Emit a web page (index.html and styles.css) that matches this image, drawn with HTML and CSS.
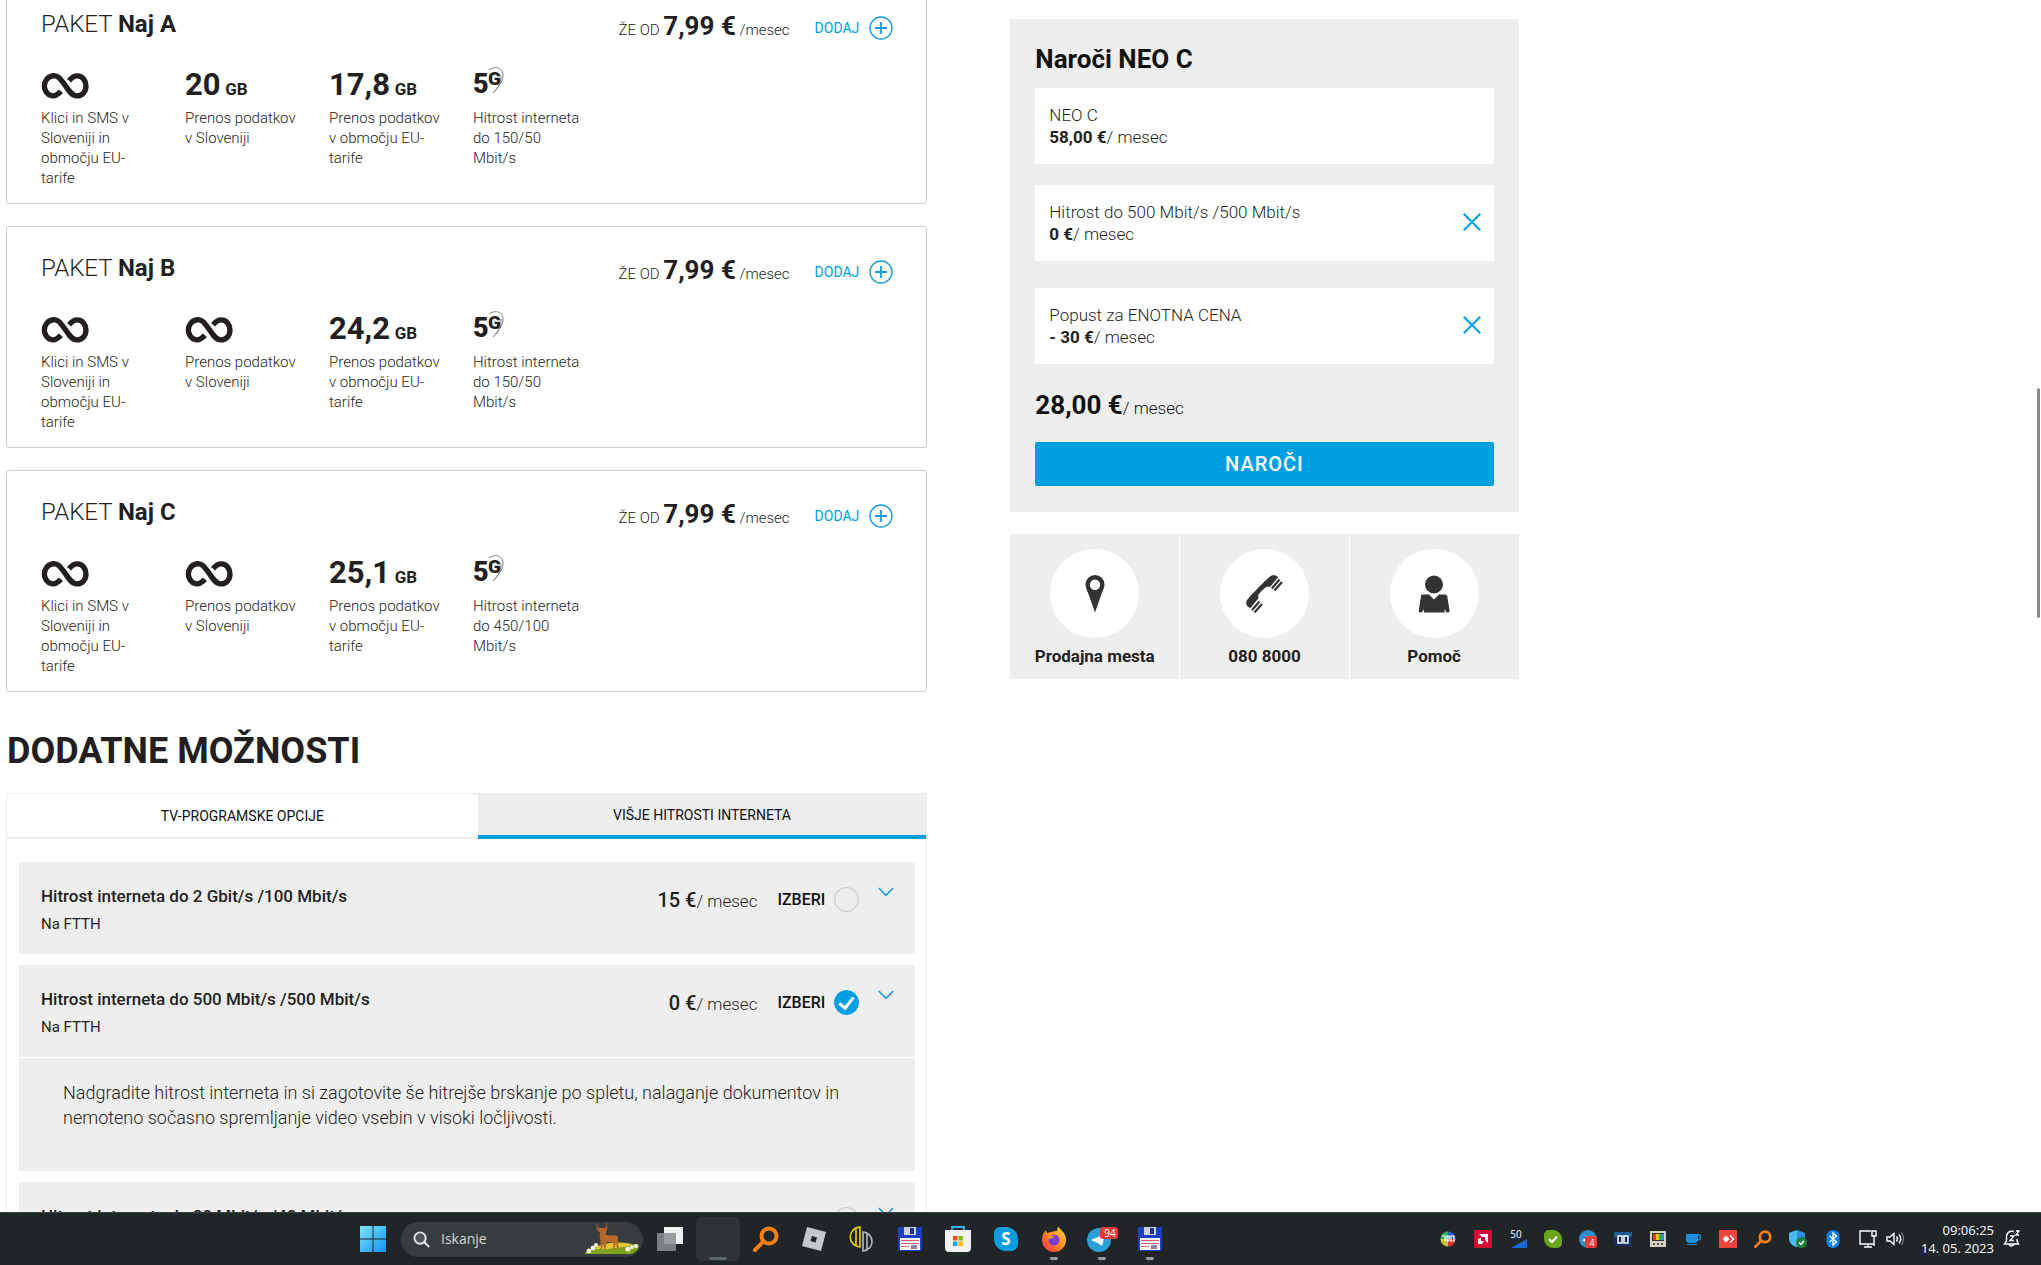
FILE: index.html
```html
<!DOCTYPE html>
<html lang="sl">
<head>
<meta charset="utf-8">
<title>Naroči NEO C</title>
<link rel="stylesheet" href="styles.css">
</head>
<body>
<svg class="defs" aria-hidden="true">
  <symbol id="inf" viewBox="0 0 40 24"><path d="M16.500 16.500C12.500 21 9.500 20.500 8.500 20.300 5 19.700 2.300 16 2.300 12S5 3.700 10 3.200c4-.3 6 2.300 9.500 7.300 4 6 6.500 10 10.500 10 5 0 8-4 8-8.500S35 3.300 30.500 3.300c-3 0-5 1.700-7 4.200" fill="none" stroke="#231f20" stroke-width="4.600"/></symbol>
  <symbol id="fiveg" viewBox="0 0 34 30"><text x="0" y="26" font-size="27" font-weight="900" fill="#231f20">5</text><text x="15" y="18" font-size="19" font-weight="900" fill="#231f20">G</text><path d="M16 3c5-4 13-3 14 4 .6 6-4 13-10 19 5-5 9-12 8-18" fill="none" stroke="#777" stroke-width=".9"/></symbol>
  <symbol id="plus" viewBox="0 0 24 24"><circle cx="12" cy="12" r="11" fill="none" stroke="#1d9ad6" stroke-width="1.400"/><path d="M12 6v12M6 12h12" stroke="#1d9ad6" stroke-width="1.800"/></symbol>
  <symbol id="cross" viewBox="0 0 18 18"><path d="M.7.7l16.600 16.600M17.300.7L.7 17.300" stroke="#009fe3" stroke-width="2"/></symbol>
  <symbol id="chev" viewBox="0 0 16 10"><path d="M.8 1L8 8.300 15.200 1" fill="none" stroke="#1d9ad6" stroke-width="1.600"/></symbol>
  <symbol id="floppy" viewBox="0 0 26 26"><path d="M1 1h24v24H2l-1-1z" fill="#1c3fc4"/><path d="M7 1h12v8H7z" fill="#cdd4e6"/><path d="M13 2h4v6h-4z" fill="#23347c"/><path d="M3 12h20v12H3z" fill="#f5f5fa"/><path d="M4 14.500h18M4 17.500h18M4 20.500h8" stroke="#e0606a" stroke-width="1.200"/><path d="M14 19h6v4h-6z" fill="#889"/></symbol>
  <symbol id="search" viewBox="0 0 26 26"><circle cx="16" cy="10" r="7.500" fill="none" stroke="#f57f14" stroke-width="4"/><path d="M10.500 15.500L2 24" stroke="#f57f14" stroke-width="4" stroke-linecap="round"/></symbol>
</svg>

<div class="viewport">
  <main class="page">
    <div class="content">
      <article class="card">
        <header class="card-head">
          <h3>PAKET <b>Naj A</b></h3>
          <p class="price">ŽE OD <b>7,99 €</b> /mesec</p>
          <button class="add" type="button">DODAJ <svg><use href="#plus"/></svg></button>
        </header>
        <ul class="features">
          <li><div class="fig"><svg class="inf"><use href="#inf"/></svg></div>Klici in SMS v<br>Sloveniji in<br>območju EU-<br>tarife</li>
          <li><div class="fig"><b>20</b> <small>GB</small></div>Prenos podatkov<br>v Sloveniji</li>
          <li><div class="fig"><b>17,8</b> <small>GB</small></div>Prenos podatkov<br>v območju EU-<br>tarife</li>
          <li><div class="fig"><svg class="fiveg"><use href="#fiveg"/></svg></div>Hitrost interneta<br>do 150/50<br>Mbit/s</li>
        </ul>
      </article>
      <article class="card">
        <header class="card-head">
          <h3>PAKET <b>Naj B</b></h3>
          <p class="price">ŽE OD <b>7,99 €</b> /mesec</p>
          <button class="add" type="button">DODAJ <svg><use href="#plus"/></svg></button>
        </header>
        <ul class="features">
          <li><div class="fig"><svg class="inf"><use href="#inf"/></svg></div>Klici in SMS v<br>Sloveniji in<br>območju EU-<br>tarife</li>
          <li><div class="fig"><svg class="inf"><use href="#inf"/></svg></div>Prenos podatkov<br>v Sloveniji</li>
          <li><div class="fig"><b>24,2</b> <small>GB</small></div>Prenos podatkov<br>v območju EU-<br>tarife</li>
          <li><div class="fig"><svg class="fiveg"><use href="#fiveg"/></svg></div>Hitrost interneta<br>do 150/50<br>Mbit/s</li>
        </ul>
      </article>
      <article class="card">
        <header class="card-head">
          <h3>PAKET <b>Naj C</b></h3>
          <p class="price">ŽE OD <b>7,99 €</b> /mesec</p>
          <button class="add" type="button">DODAJ <svg><use href="#plus"/></svg></button>
        </header>
        <ul class="features">
          <li><div class="fig"><svg class="inf"><use href="#inf"/></svg></div>Klici in SMS v<br>Sloveniji in<br>območju EU-<br>tarife</li>
          <li><div class="fig"><svg class="inf"><use href="#inf"/></svg></div>Prenos podatkov<br>v Sloveniji</li>
          <li><div class="fig"><b>25,1</b> <small>GB</small></div>Prenos podatkov<br>v območju EU-<br>tarife</li>
          <li><div class="fig"><svg class="fiveg"><use href="#fiveg"/></svg></div>Hitrost interneta<br>do 450/100<br>Mbit/s</li>
        </ul>
      </article>

      <h2>DODATNE MOŽNOSTI</h2>
      <section class="extras">
        <div class="tabs" role="tablist">
          <button class="tab" role="tab" type="button">TV-PROGRAMSKE OPCIJE</button>
          <button class="tab active" role="tab" type="button" aria-selected="true">VIŠJE HITROSTI INTERNETA</button>
        </div>
        <div class="options">
          <div class="option">
            <div class="option-head">
              <div class="option-name"><b>Hitrost interneta do 2 Gbit/s /100 Mbit/s</b><span>Na FTTH</span></div>
              <div class="option-price"><b>15 €</b>/ mesec</div>
              <label class="pick">IZBERI <input type="checkbox"></label>
              <button class="toggle" type="button" aria-label="Več"><svg><use href="#chev"/></svg></button>
            </div>
          </div>
          <div class="option">
            <div class="option-head">
              <div class="option-name"><b>Hitrost interneta do 500 Mbit/s /500 Mbit/s</b><span>Na FTTH</span></div>
              <div class="option-price"><b>0 €</b>/ mesec</div>
              <label class="pick">IZBERI <input type="checkbox" checked></label>
              <button class="toggle" type="button" aria-label="Več"><svg><use href="#chev"/></svg></button>
            </div>
            <p class="option-body">Nadgradite hitrost interneta in si zagotovite še hitrejše brskanje po spletu, nalaganje dokumentov in nemoteno sočasno spremljanje video vsebin v visoki ločljivosti.</p>
          </div>
          <div class="option">
            <div class="option-head">
              <div class="option-name"><b>Hitrost interneta do 80 Mbit/s /40 Mbit/s</b><span>Na FTTH</span></div>
              <div class="option-price"><b>5 €</b>/ mesec</div>
              <label class="pick">IZBERI <input type="checkbox"></label>
              <button class="toggle" type="button" aria-label="Več"><svg><use href="#chev"/></svg></button>
            </div>
          </div>
        </div>
      </section>
    </div>

    <aside class="side">
      <section class="order">
        <h2>Naroči NEO C</h2>
        <div class="item"><p>NEO C<br><b>58,00 €</b>/ mesec</p></div>
        <div class="item"><p>Hitrost do 500 Mbit/s /500 Mbit/s<br><b>0 €</b>/ mesec</p><button class="remove" type="button" aria-label="Odstrani"><svg><use href="#cross"/></svg></button></div>
        <div class="item last"><p>Popust za ENOTNA CENA<br><b>- 30 €</b>/ mesec</p><button class="remove" type="button" aria-label="Odstrani"><svg><use href="#cross"/></svg></button></div>
        <p class="total"><b>28,00 €</b>/ mesec</p>
        <button class="buy" type="button">NAROČI</button>
      </section>
      <nav class="help">
        <a href="#"><span class="disc"><svg viewBox="0 0 38 38"><path fill-rule="evenodd" d="M19 0a9.500 9.500 0 0 1 9.500 9.500c0 3-1.500 6-3 9.500L19 37.500 12.500 19c-1.500-3.500-3-6.500-3-9.500A9.500 9.500 0 0 1 19 0zm0 4.500a5.200 5.200 0 1 0 0 10.400 5.200 5.200 0 0 0 0-10.400z" fill="#333"/></svg></span>Prodajna mesta</a>
        <a href="#"><span class="disc"><svg viewBox="0 0 38 38"><path d="M25 1.500c2-1.800 6-1.800 8 .7l-7.500 9.300c-1 .8-2 0-3.500.3-2 .8-7.500 6-8.500 8-.8 1.700.3 3-.6 4.200L5.500 33C2 32 .5 29.500 1.500 26 4 22 20 5.500 25 1.500z" fill="#333"/><path d="M34.500 4.500l-7.700 9M37 7l-7.500 8.500M14.500 26.500l-7.500 8.500M17 29l-7.500 8.500" stroke="#333" stroke-width="2.200"/></svg></span>080 8000</a>
        <a href="#"><span class="disc"><svg viewBox="0 0 38 38"><circle cx="19" cy="9.500" r="9" fill="#333"/><path d="M7.500 19.500H14l5 5 5-5h6.500c1 0 1.500 1 1.800 2l2.300 14.500c0 1-1 1.500-2.300 1.500-1.500 0-1.500-1-2-3-.5 0-.7.500-.7 1.500v1.500H8.700V36c0-1-.2-1.500-.7-1.500-.5 2-.5 3-2 3-1.300 0-2.500-.5-2.300-1.500L6 21.200c.2-1 .5-1.700 1.500-1.700z" fill="#333"/></svg></span>Pomoč</a>
      </nav>
    </aside>
  </main>
  <div class="scrollbar"></div>
</div>

<footer class="taskbar">
  <button class="app start" type="button" aria-label="Start"><svg viewBox="0 0 26 26"><defs><linearGradient id="w" x2="1" y2="1"><stop stop-color="#7fe6fb"/><stop offset="1" stop-color="#1090f0"/></linearGradient></defs><path d="M0 0h12.500v12.500H0zM13.500 0H26v12.500H13.500zM0 13.500h12.500V26H0zM13.500 13.500H26V26H13.500z" fill="url(#w)"/></svg></button>
  <label class="search">
    <svg class="lens" viewBox="0 0 18 18"><circle cx="7.500" cy="7.500" r="6" fill="#50565a" stroke="#e4e6e7" stroke-width="2"/><path d="M12 12l4.500 4.500" stroke="#e4e6e7" stroke-width="2.200" stroke-linecap="round"/></svg>
    <input type="search" placeholder="Iskanje" aria-label="Iskanje">
    <svg class="deer" viewBox="0 0 56 32"><path d="M0 31c6-6 12-9 22-10h24c4 0 8 0 9 1 0 4-4 8-8 9H1z" fill="#7fa31d"/><path d="M10 26c8-6 20-8 38-5-4 4-16 3-24 5z" fill="#e3c534"/><path d="M15 5l6 0 2 2-1.500 4.500C24 13 29 12 32 12.500c2 .5 2.500 3 2 6L34.500 26h-1.300L32 19.500 30.500 26h-1.300l.3-7-7 .2L21.500 26h-1.300L19 19l-1 7h-1.300L16.500 17C15 14 16 11 16.500 9.500L13.500 8z" fill="#b5692d"/><path d="M16 6l-3-2.500V1M20 6l2.500-2.500V0M12 5.500l3 1M24 5l-3 1.500" fill="none" stroke="#9a5530" stroke-width="1.400"/><g fill="#f2efe0"><circle cx="5" cy="28" r="2.400"/><circle cx="9" cy="25" r="2.400"/><circle cx="12" cy="22" r="2"/><circle cx="44" cy="26" r="2.600"/><circle cx="48" cy="24" r="2"/><circle cx="52" cy="23" r="2"/></g></svg>
  </label>
  <button class="app" type="button" aria-label="Pogled opravil"><svg viewBox="0 0 26 26"><path d="M7 1h19v17H7z" fill="#f0f1f1"/><path d="M0 7h19v18H0z" fill="#8b8e90" opacity=".85"/></svg></button>
  <button class="app current" type="button" aria-label="Okno"></button>
  <button class="app" type="button" aria-label="Iskalnik"><svg><use href="#search"/></svg></button>
  <button class="app" type="button" aria-label="Igre"><svg viewBox="0 0 26 26"><path fill-rule="evenodd" d="M6 1l19 5-5 19-19-5zM11 10l-1.500 5 5 1.500 1.500-5z" fill="#c3c7ca"/></svg></button>
  <button class="app" type="button" aria-label="Urejevalnik"><svg viewBox="0 0 26 26"><path d="M11 1v20C-2 20-2 2 11 1zM7 3v16" fill="none" stroke="#e8cf1c" stroke-width="1.600"/><path d="M14 6v19c12-1 12-18 0-19zM18 8v15" fill="none" stroke="#b9bcbe" stroke-width="1.600"/></svg></button>
  <button class="app" type="button" aria-label="Datoteke"><svg><use href="#floppy"/></svg></button>
  <button class="app" type="button" aria-label="Trgovina"><svg viewBox="0 0 26 26"><path d="M7 5V1h12v4" fill="none" stroke="#36b4e5" stroke-width="1.800"/><path d="M0 4h26v18c0 2-1 4-4 4H4c-3 0-4-2-4-4z" fill="#f2f2f2"/><path d="M8 10h4.500v4.500H8z" fill="#f25022"/><path d="M13.500 10H18v4.500h-4.500z" fill="#7fba00"/><path d="M8 15.500h4.500V20H8z" fill="#00a4ef"/><path d="M13.500 15.500H18V20h-4.500z" fill="#ffb900"/></svg></button>
  <button class="app" type="button" aria-label="Skype"><svg viewBox="0 0 26 26"><path d="M7 1h6a12 12 0 0 1 12 12v5a7 7 0 0 1-7 7h-5A12 12 0 0 1 1 13V7a6 6 0 0 1 6-6z" fill="#0a9de0"/><text x="13" y="19" text-anchor="middle" font-size="17" font-weight="700" fill="#fff">S</text></svg></button>
  <button class="app running" type="button" aria-label="Firefox"><svg viewBox="0 0 26 26"><defs><linearGradient id="ff" x1="1" y1="0" x2="0" y2="1"><stop stop-color="#ffe23c"/><stop offset=".5" stop-color="#ff8a1f"/><stop offset="1" stop-color="#f0264f"/></linearGradient></defs><path d="M17 0c1 3 8 6 8 14a12 12 0 0 1-24 0c0-4 1-7 4-10l1 3 4-1c2-1 5-1 6-1z" fill="url(#ff)"/><circle cx="13" cy="14" r="5.500" fill="#7a3fd0"/><path d="M5 10c4-2 7 0 9 1-3 0-4 2-6 2z" fill="#ff9a1f"/></svg></button>
  <button class="app running" type="button" aria-label="Telegram"><svg class="wide" viewBox="0 0 32 26"><circle cx="13" cy="14" r="12" fill="#2a9fd8"/><path d="M5 14l14-6-3 12-4-3z" fill="#fff"/><rect x="14" y="1" width="18" height="12" rx="3" fill="#e53935"/><text x="24" y="11" text-anchor="middle" font-size="10" fill="#fff">94</text></svg></button>
  <button class="app running" type="button" aria-label="Datoteke"><svg><use href="#floppy"/></svg></button>

  <div class="tray">
    <svg viewBox="0 0 18 18"><circle cx="9" cy="9" r="7.500" fill="#2a63c9"/><path d="M9 1.500A7.500 7.500 0 0 0 1.500 9H9z" fill="#2fae5a"/><path d="M9 16.500A7.500 7.500 0 0 0 16.500 9H9z" fill="#d7362c"/><path d="M1.500 9A7.500 7.500 0 0 0 9 16.500V9z" fill="#c8c02e"/><path d="M3 6h3v5M8 6h2v5H8zM12 6h3v5h-3z" fill="none" stroke="#fff" stroke-width="1.200"/></svg>
    <svg viewBox="0 0 18 18"><path d="M0 0h18v18H0z" fill="#d60a37"/><path d="M5 4h9v9l-3-3V7H8z" fill="#fff"/><path d="M4 9l3-1v3h3l-2 3H4z" fill="#fff"/></svg>
    <svg viewBox="0 0 18 18"><text x="7" y="8" text-anchor="middle" font-size="10" fill="#fff">50</text><path d="M18 9v9H2z" fill="#1769d2"/></svg>
    <svg viewBox="0 0 18 18"><path d="M5 0h4a9 9 0 0 1 9 9v4a5 5 0 0 1-5 5H9a9 9 0 0 1-9-9V5a5 5 0 0 1 5-5z" fill="#6aa61d"/><path d="M5 9l3 3 5-5.500" fill="none" stroke="#fff" stroke-width="2"/></svg>
    <svg viewBox="0 0 18 18"><circle cx="9" cy="9" r="9" fill="#2d8fd0"/><path d="M3 10l5-2-1 4z" fill="#fff"/><rect x="6" y="6" width="12" height="12" rx="3" fill="#e53e3a"/><text x="13" y="16" text-anchor="middle" font-size="9" fill="#fff">4</text></svg>
    <svg viewBox="0 0 18 18"><path d="M0 2h18v14H0z" fill="#1f5a94"/><path d="M0 7h18v9H0z" fill="#182d62"/><path d="M4 6v7h4V6zM14 6v7h-4V6z" fill="none" stroke="#fff" stroke-width="1.500"/></svg>
    <svg viewBox="0 0 18 18"><path d="M1 1h16v16H1z" fill="#d8d2c2"/><path d="M3 3h12v8H3z" fill="#333"/><path d="M4 4h3v6H4z" fill="#e23b2e"/><path d="M7 4h3v6H7z" fill="#f3c41d"/><path d="M10 4h3v6h-3z" fill="#35b04a"/><path d="M13 4h2v6h-2z" fill="#2e8fe0"/><path d="M4 13h2v2H4zM8 13h2v2H8zM12 13h2v2h-2z" fill="#555"/></svg>
    <svg viewBox="0 0 18 18"><path d="M2 4h12v6c0 2-2 3-4 3H6c-2 0-4-1-4-3zM3 14h10v1H3z" fill="#1d8fe0"/><path d="M14 5h2c1 3 0 5-2 5" fill="none" stroke="#1d8fe0" stroke-width="1.400"/></svg>
    <svg viewBox="0 0 18 18"><path d="M0 0h18v18H0z" fill="#ef443b"/><path d="M7 5.500l3.500 3.500L7 12.500 3.500 9z" fill="#fff"/><path d="M11 5.500L14.500 9 11 12.500" fill="none" stroke="#fff" stroke-width="1.400"/></svg>
    <svg><use href="#search"/></svg>
    <svg viewBox="0 0 18 18"><path d="M8 0l8 3v5c0 5-4 8-8 9-4-1-8-4-8-9V3z" fill="#2a8fe0"/><path d="M8 0v17c-4-1-8-4-8-9V3z" fill="#4cb8f0"/><circle cx="12.500" cy="12.500" r="5.500" fill="#16803c"/><path d="M10 12.500l2 2 3-3.500" fill="none" stroke="#fff" stroke-width="1.400"/></svg>
    <svg viewBox="0 0 18 18"><rect x="2.500" width="13" height="18" rx="6" fill="#0a7fe8"/><path d="M5.500 6l7 6L9 15V3l3.500 3-7 6" fill="none" stroke="#fff" stroke-width="1.300"/></svg>
    <svg viewBox="0 0 18 18"><path d="M12 1H1v13h14v-4M5 17h8M9 14v3M13 1h4v5h-4zM15 6v10" fill="none" stroke="#fff" stroke-width="1.400"/></svg>
    <svg class="near" viewBox="0 0 18 18"><path d="M1 7v4h3l4 3.500v-11L4 7z" fill="none" stroke="#fff" stroke-width="1.400"/><path d="M10.500 6.500q2 2.500 0 5M13 4.500q3.500 4.500 0 9" fill="none" stroke="#fff" stroke-width="1.400"/><path d="M15.500 2.500q4 6.500 0 13" fill="none" stroke="#777" stroke-width="1.200"/></svg>
    <time class="clock" datetime="2023-05-14T09:06:25">09:06:25<br>14. 05. 2023</time>
    <svg class="near" viewBox="0 0 18 18"><path d="M11 1.500C6 .5 3.500 3 3.500 7v4L1.500 14h14l-1.500-3V9M6 14.500q2.500 3 5 0" fill="none" stroke="#fff" stroke-width="1.400"/><path d="M7 6h4l-4 4.500h4M13 1h3l-3 4h3" fill="none" stroke="#fff" stroke-width="1.300"/></svg>
  </div>
</footer>
</body>
</html>
```
FILE: styles.css
```css
* {
  box-sizing: border-box;
}

body {
  margin: 0;
  height: 100vh;
  display: flex;
  flex-direction: column;
  font: 300 15px/20px Roboto, sans-serif;
  color: #231f20;
  background: #fff;
}

h2,
h3,
p,
ul {
  margin: 0;
  padding: 0;
}

b {
  font-weight: 700;
}

button {
  font: inherit;
  color: inherit;
  margin: 0;
  padding: 0;
  border: 0;
  background: none;
}

.defs {
  display: none;
}

.viewport {
  position: relative;
  flex: 1;
  min-height: 0;
  overflow: hidden;
}

.page {
  display: grid;
  grid-template-columns: 921fr 508fr;
  column-gap: 83px;
  align-items: start;
  padding: 0 25.6% 0 6px;
}

.scrollbar {
  position: absolute;
  top: 32%;
  right: 1px;
  width: 3px;
  height: 19%;
  border-radius: 2px;
  background: #8b8b8b;
}

/* Plan cards */

.content {
  margin-top: -18px;
}

.card {
  height: 222px;
  margin-bottom: 22px;
  padding: 25px 33px 0 34px;
  border: 1px solid #ccc;
  border-radius: 3px;
}

.card-head {
  display: flex;
  align-items: center;
  height: 40px;
}

.card-head h3 {
  flex: 1;
  padding-bottom: 8px;
  font-size: 24px;
  line-height: 32px;
  font-weight: 300;
}

.price {
  line-height: 32px;
}

.price b {
  font-size: 26px;
}

.add {
  display: flex;
  align-items: center;
  gap: 10px;
  margin-left: 25px;
  font-size: 14px;
  font-weight: 400;
  color: #009fe3;
}

.add svg {
  width: 24px;
  height: 24px;
}

.features {
  display: flex;
  list-style: none;
  padding-top: 17px;
}

.features li {
  width: 144px;
}

.fig {
  height: 43px;
  line-height: 40px;
}

.fig b {
  font-size: 31px;
}

.fig small {
  margin-left: 1px;
  font-size: 17px;
  font-weight: 700;
}

.inf {
  width: 48px;
  height: 28px;
  margin-top: 7px;
}

.fiveg {
  width: 34px;
  height: 30px;
  margin-top: 2px;
}

/* Extra options */

.content h2 {
  padding: 15px 1px 0;
  font-size: 36px;
  line-height: 44px;
}

.extras {
  margin-top: 20px;
  border: 1px solid #eee;
  border-top: 0;
}

.tabs {
  display: grid;
  grid-template-columns: 471fr 449fr;
}

.tab {
  height: 46px;
  border-top: 1px solid #eee;
  border-bottom: 2px solid #eee;
  font-size: 14px;
  font-weight: 400;
  color: #111;
}

.tab.active {
  background: #eee;
  border-bottom: 4px solid #009fe3;
}

.options {
  display: grid;
  gap: 11px;
  padding: 23px 11px 0 12px;
}

.option-head {
  display: flex;
  align-items: flex-start;
  height: 92px;
  padding: 22px 21px 0 22px;
  background: #eee;
}

.option-name {
  flex: 1;
  line-height: 28px;
  font-weight: 400;
}

.option-name b {
  display: block;
  margin-top: -2px;
  font-size: 17px;
  line-height: 28px;
  font-weight: 500;
}

.option-price {
  padding-top: 4px;
  font-size: 17px;
  line-height: 24px;
}

.option-price b {
  font-size: 20px;
  font-weight: 500;
}

.pick {
  display: flex;
  align-items: center;
  gap: 9px;
  padding: 3px 19px 0 20px;
  font-size: 16px;
  line-height: 24px;
  font-weight: 500;
  color: #111;
}

.pick input {
  appearance: none;
  width: 25px;
  height: 25px;
  margin: 0;
  display: grid;
  place-items: center;
  border: 1px solid #c4c4c4;
  border-radius: 50%;
}

.pick input:checked {
  border-color: #009fe3;
  background: #009fe3;
}

.pick input:checked::before {
  content: "";
  width: 6px;
  height: 12px;
  margin-bottom: 3px;
  border: solid #fff;
  border-width: 0 3px 3px 0;
  transform: rotate(38deg);
}

.toggle {
  height: 16px;
}

.toggle svg {
  display: block;
  width: 16px;
  height: 10px;
}

.option-body {
  margin-top: 1px;
  padding: 22px 44px 41px;
  background: #eee;
  font-size: 18px;
  line-height: 25px;
}

/* Order summary */

.side {
  padding-top: 19px;
}

.order {
  padding: 24px 25px 26px;
  background: #eee;
  font-size: 17px;
  line-height: 22px;
}

.order h2 {
  margin-bottom: 13px;
  font-size: 26px;
  line-height: 32px;
  color: #111;
}

.item {
  display: flex;
  align-items: center;
  justify-content: space-between;
  height: 76px;
  margin-bottom: 21px;
  padding: 0 13px 0 14px;
  background: #fff;
}

.item.last {
  margin-top: 27px;
  margin-bottom: 28px;
}

.remove {
  padding-bottom: 3px;
}

.remove svg {
  display: block;
  width: 18px;
  height: 18px;
}

.total {
  margin-bottom: 18px;
  line-height: 32px;
  color: #111;
}

.total b {
  font-size: 26px;
  line-height: 26px;
}

.buy {
  display: block;
  width: 100%;
  height: 44px;
  border-radius: 2px;
  background: #009fe3;
  color: #fff;
  font-size: 20px;
  font-weight: 500;
  letter-spacing: 1px;
}

.help {
  display: grid;
  grid-template-columns: repeat(3, 1fr);
  gap: 1px;
  margin-top: 22px;
}

.help a {
  display: grid;
  justify-items: center;
  gap: 7px;
  height: 145px;
  padding-top: 15px;
  align-content: start;
  background: #eee;
  color: #231f20;
  font-size: 17px;
  line-height: 22px;
  font-weight: 700;
  text-decoration: none;
}

.disc {
  display: grid;
  place-items: center;
  width: 89px;
  height: 89px;
  border-radius: 50%;
  background: #fff;
}

.disc svg {
  width: 38px;
  height: 38px;
}

/* Taskbar */

.taskbar {
  display: flex;
  align-items: center;
  height: 53px;
  padding: 0 20px 0 17%;
  border-top: 1px solid #3b4144;
  background: #202528;
  color: #fff;
  font: 400 13px/18px "Open Sans", "Noto Sans", sans-serif;
}

.app {
  position: relative;
  display: grid;
  place-items: center;
  flex: none;
  width: 44px;
  height: 44px;
  margin: 0 2px;
  border-radius: 5px;
}

.app.start {
  margin-left: 4px;
}

.app svg {
  width: 26px;
  height: 26px;
  overflow: visible;
}

.app .wide {
  width: 32px;
}

.current {
  background: #2d3235;
}

.running::after,
.current::after {
  content: "";
  position: absolute;
  bottom: 1px;
  left: 50%;
  width: 8px;
  height: 3px;
  margin-left: -4px;
  border-radius: 2px;
  background: #9a9d9f;
}

.current::after {
  width: 18px;
  margin-left: -9px;
  background: #5b666b;
}

.search {
  display: flex;
  align-items: center;
  flex: none;
  width: 242px;
  height: 35px;
  margin: 0 3px 0 4px;
  padding: 0 3px 0 12px;
  border-radius: 18px;
  background: #373c3f;
}

.lens {
  width: 17px;
  height: 17px;
}

.search input {
  flex: 1;
  min-width: 0;
  margin: 0 0 0 11px;
  padding: 0;
  border: 0;
  background: none;
  font: inherit;
  font-size: 14px;
  color: #fff;
}

.search input::placeholder {
  color: #d5d7d8;
}

.deer {
  width: 56px;
  height: 32px;
}

.tray {
  display: flex;
  align-items: center;
  gap: 17px;
  margin-left: auto;
}

.tray svg {
  width: 18px;
  height: 18px;
}

.tray .near {
  margin-left: -8px;
}

.clock {
  padding-bottom: 1px;
  text-align: right;
}
```
